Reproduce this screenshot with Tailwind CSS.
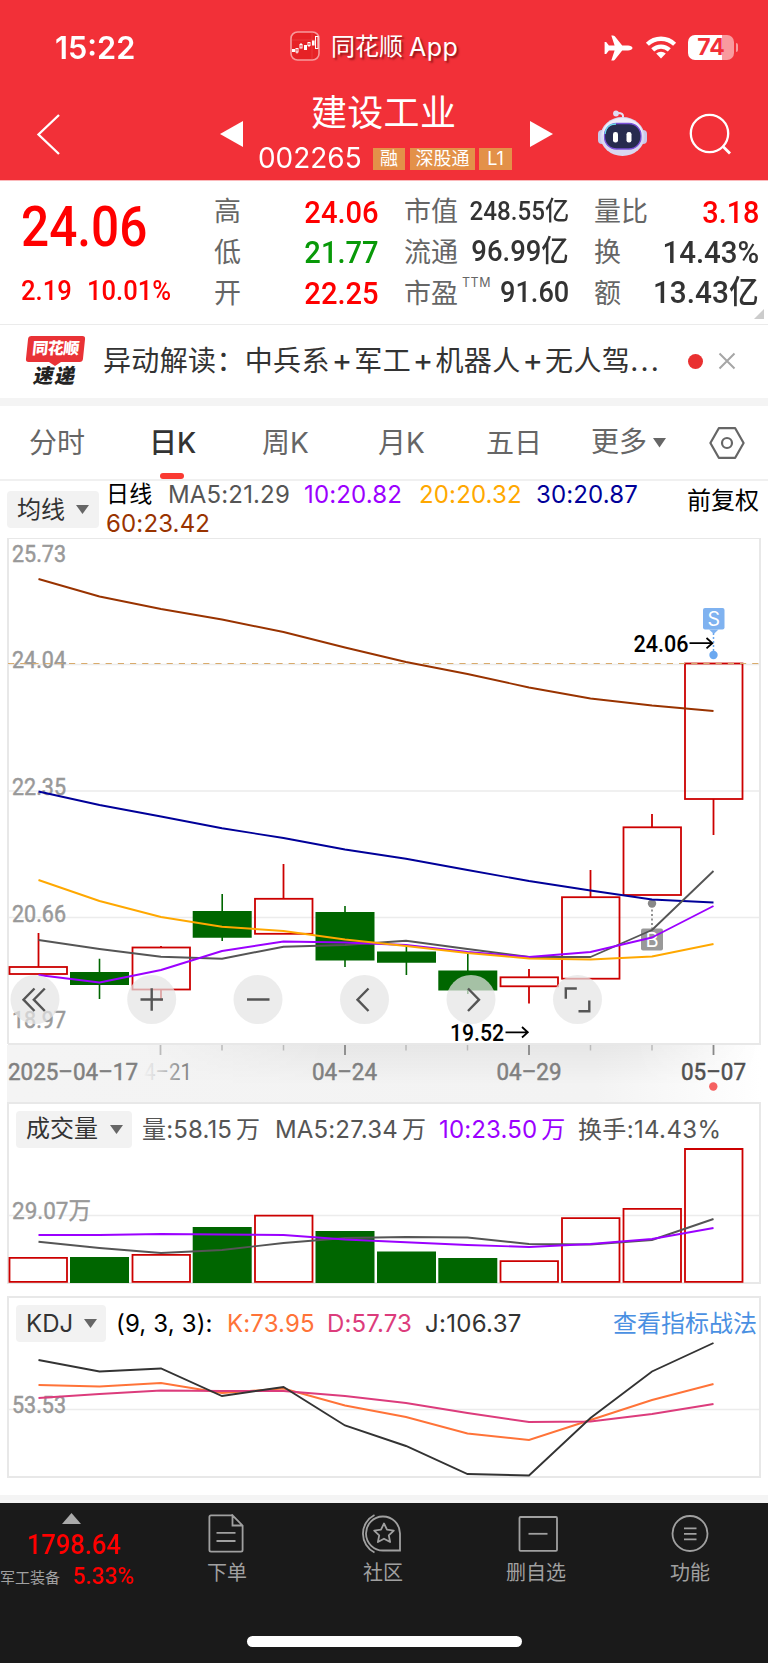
<!DOCTYPE html>
<html lang="zh-CN">
<head>
<meta charset="utf-8">
<title>建设工业 002265</title>
<script src="https://cdn.jsdelivr.net/npm/@tailwindcss/browser@4"></script>
</head>
<body class="w-[768px] h-[1663px] bg-white overflow-hidden font-['Inter','Noto_Sans_CJK_SC',sans-serif] text-[#333] whitespace-nowrap">

<!-- header -->
<header class="h-[180px] bg-[#f23038] text-white">
  <div class="h-[92px] pt-[29px] flex items-start">
    <div class="ml-[55px] w-[235px] h-[36px] flex items-center text-[31px] font-semibold leading-none"><span class="inline-block origin-left scale-x-[.99]">15:22</span></div>
    <svg class="mt-[2px] w-[30px] h-[30px]" viewBox="0 0 30 30">
      <rect x="1" y="1" width="28" height="28" rx="6.5" fill="#e62226" stroke="#f79a9c" stroke-width="1.6"/>
      <path d="M2 9h26M22 2v26" stroke="#f04a4c" stroke-width=".6"/>
      <g stroke="#fff" stroke-width="1" fill="none"><rect x="6" y="17.500" width="2" height="3.500"/><path d="M7 21v1.500M11 12v2M19 14.500v1.500"/><rect x="10" y="13.500" width="2" height="3.500"/><rect x="18" y="11.500" width="2" height="3"/><rect x="25.500" y="5.500" width="2.500" height="12"/></g>
      <path d="M2 18h3v3H2zM14 14h3v5h-3zM22 9.500h2.600v5H22z" fill="#fff"/>
    </svg>
    <div class="ml-[11px] w-[272px] h-[36px] flex items-center text-[24px] leading-none [text-shadow:2px_2px_2px_rgba(70,0,0,.55)]">同花顺<span class="ml-[6px] text-[25px] tracking-[.5px]">App</span></div>
    <svg class="mt-[6px] w-[30px] h-[26px]" viewBox="0 0 30 26"><path d="M29.500 13c0-1.600-2.300-2.500-4.500-2.500h-5.800L11.800 1.200C11.300.6 10.600.4 9.800.4H8.300l3.300 10.100H5.900L3.200 7H1.600v12h1.600l2.700-3.500h5.700L8.300 25.600h1.500c.8 0 1.500-.2 2-.8l7.400-9.300H25c2.200 0 4.500-.9 4.500-2.500z" fill="#fff"/></svg>
    <svg class="ml-[11px] mt-[6px] w-[34px] h-[24px]" viewBox="0 0 34 24"><g fill="none" stroke="#fff" stroke-width="4.300"><path d="M3.400 9.300a19.500 19.500 0 0 1 27.200 0"/><path d="M8.700 14.900a12 12 0 0 1 16.600 0"/></g><path d="M17 23.500l-4.800-4.900a6.900 6.900 0 0 1 9.600 0z" fill="#fff"/></svg>
    <div class="ml-[10px] mt-[6px] flex items-center">
      <div class="w-[46px] h-[25px] rounded-[7px] bg-[linear-gradient(90deg,#fff_74%,#f99a9e_74%)] flex items-center justify-center text-[23px] leading-none font-bold text-[#f23038]">74</div>
      <div class="ml-[2px] w-[2px] h-[9px] rounded-r-full bg-[#f99a9e]"></div>
    </div>
  </div>
  <div class="h-[88px] flex">
    <svg class="w-[232px] h-[88px]" viewBox="0 92 232 88"><path d="M59 115L38.500 134.500L59 154" fill="none" stroke="#fff" stroke-width="2.300"/></svg>
    <div class="w-[308px] -ml-[12px] flex">
      <svg class="w-[23px] h-[88px]" viewBox="220 92 23 88"><path d="M220 134l23-13v26z" fill="#fff"/></svg>
      <div class="ml-[15px] w-[256px]">
        <div class="h-[42px] pl-[53px] text-[36px] leading-[43px] tracking-[.3px]">建设工业</div>
        <div class="mt-[14px] h-[22px] flex items-center">
          <span class="w-[115px] -mt-[1px] text-[28.500px] leading-none"><span class="inline-block origin-left scale-x-[.98]">002265</span></span>
          <span class="w-[32px] h-[22px] bg-[#e39149] text-[18px] leading-[22px] text-center">融</span>
          <span class="ml-[5px] w-[65px] h-[22px] bg-[#e39149] text-[18px] leading-[22px] text-center">深股通</span>
          <span class="ml-[4px] w-[33px] h-[22px] bg-[#e39149] text-[18px] leading-[22px] text-center">L1</span>
        </div>
      </div>
    </div>
    <svg class="w-[240px] h-[88px]" viewBox="528 92 240 88">
      <path d="M530 121v26l23-13z" fill="#fff"/>
      <path d="M623 119v-3c0-2-1.500-3-5-3" fill="none" stroke="#e4e2f4" stroke-width="2"/><circle cx="616" cy="113.500" r="2.900" fill="#dfdcf3"/>
      <rect x="598" y="130" width="8" height="14" rx="4" fill="#c9c9ea"/><rect x="639" y="130" width="8" height="14" rx="4" fill="#c9c9ea"/>
      <ellipse cx="622.500" cy="136.500" rx="22" ry="19.500" fill="#d9d8f0"/><ellipse cx="622.500" cy="134" rx="20" ry="16" fill="#efeefa"/>
      <rect x="604.500" y="123.500" width="36.500" height="25.500" rx="12" fill="#272b4f" stroke="#7a50d8" stroke-width="1.300"/>
      <path d="M605 134c.5-6 4-10 11-10" fill="none" stroke="#69dfe8" stroke-width="1.300"/>
      <rect x="613" y="132" width="5" height="10.500" rx="2.300" fill="#fff"/><rect x="626.500" y="132" width="5" height="10.500" rx="2.300" fill="#fff"/>
      <circle cx="709.500" cy="133.500" r="18.700" fill="none" stroke="#fff" stroke-width="2.300"/><path d="M722.500 146l7.500 7.500" stroke="#fff" stroke-width="2.800"/>
    </svg>
  </div>
</header>

<!-- quote -->
<section class="h-[145px] border-t border-b border-t-[#fbb9bb] border-b-[#ebebeb] flex">
  <div class="w-[214px] pl-[21px] font-['Roboto'] font-medium text-[#ff0000]">
    <div class="mt-[18px] h-[56px] text-[55px] leading-[56px] font-medium"><span class="inline-block origin-left scale-x-[.9]">24.06</span></div>
    <div class="mt-[20px] h-[32px] text-[27.500px] leading-[32px] flex">
      <span class="w-[66px]"><span class="inline-block origin-left scale-x-[.93]">2.19</span></span><span><span class="inline-block origin-left scale-x-[.93]">10.01%</span></span>
    </div>
  </div>
  <div class="w-[165px] pt-[11px] text-[27px] text-[#666]">
    <div class="h-[41px] flex items-center justify-between"><span>高</span><span class="mb-[2px] origin-right scale-x-[.91] font-['Roboto'] font-medium text-[32px] leading-none text-[#ff0000]">24.06</span></div>
    <div class="h-[41px] flex items-center justify-between"><span>低</span><span class="mb-[3px] origin-right scale-x-[.91] font-['Roboto'] font-medium text-[32px] leading-none text-[#089908]">21.77</span></div>
    <div class="h-[41px] flex items-center justify-between"><span>开</span><span class="mb-[4px] origin-right scale-x-[.91] font-['Roboto'] font-medium text-[32px] leading-none text-[#ff0000]">22.25</span></div>
  </div>
  <div class="ml-[25px] w-[165px] pt-[11px] text-[27px] text-[#666]">
    <div class="h-[41px] flex items-center justify-between"><span class="w-[54px]">市值</span><span class="mb-[3px] origin-right scale-x-[.93] font-['Roboto','Noto_Sans_CJK_SC'] font-medium text-[26px] leading-none text-[#333]">248.55亿</span></div>
    <div class="h-[41px] flex items-center justify-between"><span class="w-[54px]">流通</span><span class="mb-[4px] origin-right scale-x-[.93] font-['Roboto','Noto_Sans_CJK_SC'] font-medium text-[29.500px] leading-none text-[#333]">96.99亿</span></div>
    <div class="h-[41px] flex items-center justify-between"><span class="flex">市盈<span class="ml-[4px] mt-[3px] text-[12.500px] leading-none tracking-[.5px]">TTM</span></span><span class="mb-[3px] origin-right scale-x-[.92] font-['Roboto'] font-medium text-[29.500px] leading-none text-[#333]">91.60</span></div>
  </div>
  <div class="ml-[25px] w-[165px] pt-[11px] text-[27px] text-[#666]">
    <div class="h-[41px] flex items-center justify-between"><span>量比</span><span class="mb-[2px] origin-right scale-x-[.9] font-['Roboto'] font-medium text-[32px] leading-none text-[#ff0000]">3.18</span></div>
    <div class="h-[41px] flex items-center justify-between"><span>换</span><span class="mb-[3px] origin-right scale-x-[.92] font-['Roboto'] font-medium text-[32px] leading-none text-[#333]">14.43%</span></div>
    <div class="h-[41px] flex items-center justify-between"><span>额</span><span class="mb-[5px] origin-right scale-x-[.93] font-['Roboto','Noto_Sans_CJK_SC'] font-medium text-[32px] leading-none text-[#333]">13.43亿</span></div>
  </div>
  <svg class="-ml-[5px] mt-[128px] w-[10px] h-[10px] shrink-0" viewBox="0 0 10 10"><path d="M10 0v10H0z" fill="#ccc"/></svg>
</section>

<!-- news -->
<section class="h-[73px] flex items-center">
  <div class="ml-[24px] w-[62px] h-[52px] flex flex-col items-center">
    <div class="w-[57px] h-[26px] rounded-[3px] bg-[#e93236] -skew-x-6 text-white text-[16px] font-black leading-[25px] text-center tracking-[-.5px]">同花顺</div>
    <svg class="w-[12px] h-[4px]" viewBox="0 0 12 4"><path d="M0 0h12L6 4z" fill="#e93236"/></svg>
    <div class="-skew-x-12 text-[#222] text-[20px] font-black leading-[20px] tracking-[1.500px]">速递</div>
  </div>
  <div class="ml-[17px] -mt-[1px] w-[585px] text-[28px] leading-[40px] tracking-[.35px] text-[#333]">异动解读：中兵系<span class="inline-block w-[24.500px] text-center text-[31px] leading-[28px]">+</span>军工<span class="inline-block w-[24.500px] text-center text-[31px] leading-[28px]">+</span>机器人<span class="inline-block w-[24.500px] text-center text-[31px] leading-[28px]">+</span>无人驾<span class="tracking-[2.200px]">...</span></div>
  <div class="w-[15px] h-[15px] -mt-[1px] rounded-full bg-[#e93030]"></div>
  <svg class="ml-[15px] -mt-[1px] w-[18px] h-[18px]" viewBox="0 0 18 18"><path d="M1.500 1.500l15 15M16.500 1.500l-15 15" stroke="#a6a6a6" stroke-width="2"/></svg>
</section>
<div class="h-[8px] bg-[#f4f4f4]"></div>

<!-- tabs -->
<nav class="h-[75px] border-b-2 border-[#f0f0f0] flex text-[28px] leading-[75px] text-[#666]">
  <div class="pl-[29px] w-[149px]">分时</div>
  <div class="w-[113px] h-[73px] relative font-medium text-[#333]">日K<span class="absolute left-[11px] bottom-0 w-[24px] h-[6px] rounded-full bg-[#fa3a32]"></span></div>
  <div class="w-[116px]">周K</div>
  <div class="w-[108px]">月K</div>
  <div class="w-[105px]">五日</div>
  <div class="flex items-center w-[118px]">更多<svg class="ml-[6px] w-[13px] h-[10px]" viewBox="0 0 13 10"><path d="M0 0h13L6.500 9.500z" fill="#666"/></svg></div>
  <svg class="mt-[21px] w-[36px] h-[32px]" viewBox="0 0 36 32"><path d="M9.800 1.200h16.400L34.600 16l-8.400 14.800H9.800L1.400 16z" fill="none" stroke="#666" stroke-width="2.200" stroke-linejoin="round"/><circle cx="18" cy="16" r="5" fill="none" stroke="#666" stroke-width="2.200"/></svg>
</nav>

<!-- moving averages -->
<section class="h-[57px] flex text-[24px]">
  <div class="ml-[7px] mt-[10px] w-[92px] h-[37px] rounded-[4px] bg-[#f2f2f2] flex items-center pl-[10px] leading-none">均线<svg class="ml-[11px] w-[13px] h-[9px]" viewBox="0 0 13 9"><path d="M0 0h13L6.500 9z" fill="#666"/></svg></div>
  <div class="ml-[7px] -mt-[1px] w-[581px] leading-[29px] tracking-[.15px]">
    <div class="flex h-[29px]">
      <span class="w-[62px] text-[23px]">
        <span class="text-black">日线</span>
      </span>
      <span class="w-[136px] text-[#555]">MA5:21.29</span>
      <span class="w-[115px] text-[#9b00ff]">10:20.82</span>
      <span class="w-[117px] text-[#ffa800]">20:20.32</span>
      <span class="text-[#000099]">30:20.87</span>
    </div>
    <div class="text-[#993300]">60:23.42</div>
  </div>
  <div class="leading-[39px] text-black">前复权</div>
</section>

<!-- candlestick chart -->
<svg class="block w-[768px] h-[564px]" viewBox="0 538 768 564" font-family="Roboto, 'Noto Sans CJK SC', sans-serif" font-size="24">
  <defs>
    <linearGradient id="axisFade" x1="0" x2="1" y1="0" y2="0"><stop offset="0" stop-color="#f4f4f4"/><stop offset=".78" stop-color="#f3f3f3"/><stop offset="1" stop-color="#fff"/></linearGradient>
    <linearGradient id="axisShade" x1="0" x2="0" y1="0" y2="1"><stop offset="0" stop-color="#000" stop-opacity=".05"/><stop offset="1" stop-color="#000" stop-opacity="0"/></linearGradient>
    <linearGradient id="shadeSide" x1="0" x2="1" y1="0" y2="0"><stop offset="0" stop-color="#000"/><stop offset=".3" stop-color="#fff"/><stop offset=".8" stop-color="#fff"/><stop offset="1" stop-color="#000"/></linearGradient>
    <mask id="shadeMask"><rect x="140" y="1045" width="620" height="57" fill="url(#shadeSide)"/></mask>
    <linearGradient id="dateFade" gradientUnits="userSpaceOnUse" x1="142" x2="182" y1="0" y2="0"><stop offset="0" stop-color="#999" stop-opacity="0"/><stop offset=".25" stop-color="#999" stop-opacity=".2"/><stop offset="1" stop-color="#888"/></linearGradient>
  </defs>
  <rect x="7" y="1045" width="754" height="57" fill="url(#axisFade)"/>
  <rect x="140" y="1045" width="620" height="40" fill="url(#axisShade)" mask="url(#shadeMask)"/>
  <g fill="none" stroke="#ececec" stroke-width="1.500">
    <path d="M8 664.500H760M8 791H760M8 917.500H760"/><path d="M8 1044V538H760V1044H8" stroke="#e8e8e8" stroke-width="2"/>
  </g>
  <g fill="#999" stroke="#999" stroke-width=".5">
    <text x="12" y="562" textLength="54" lengthAdjust="spacingAndGlyphs">25.73</text>
    <text x="12" y="668" textLength="54" lengthAdjust="spacingAndGlyphs">24.04</text>
    <text x="12" y="795" textLength="54" lengthAdjust="spacingAndGlyphs">22.35</text>
    <text x="12" y="921.500" textLength="54" lengthAdjust="spacingAndGlyphs">20.66</text>
    <text x="12" y="1027.500" textLength="54" lengthAdjust="spacingAndGlyphs">18.97</text>
  </g>
  <g fill="none" stroke="#cc0000" stroke-width="1.800">
    <rect x="9.500" y="967" width="57.500" height="7"/><path d="M38.500 933v34"/>
    <rect x="132.500" y="947.500" width="57.500" height="42"/><path d="M161 946v1M161 990v11"/>
    <rect x="255" y="898.800" width="57.500" height="35"/><path d="M283.500 864v35"/>
    <rect x="500.500" y="977.300" width="57.500" height="9"/><path d="M529 969v8M529 986.500v17"/>
    <rect x="562" y="897.200" width="57.500" height="81.500"/><path d="M590.500 870v27"/>
    <rect x="623.500" y="827.300" width="57.500" height="67.700"/><path d="M652 814v13"/>
    <rect x="685" y="663.500" width="57.500" height="135.500"/><path d="M713.500 799v36"/>
  </g>
  <path d="M8 663.500H760" stroke="#d9ab6c" stroke-width="1" stroke-dasharray="6.200 6"/>
  <g fill="#006600" stroke="none">
    <path d="M70 972h59v13H70zM98.700 958.700h1.600V999h-1.600z"/>
    <path d="M192.700 911h59v26.700h-59zM221.400 894h1.600v47h-1.600z"/>
    <path d="M315.500 912h59v48.500h-59zM344.200 906h1.600v61h-1.600z"/>
    <path d="M377 951.500h59v11.200h-59zM405.600 947h1.600v28h-1.600z"/>
    <path d="M438.300 970.500h59v20h-59zM467 954h1.600v40H467z"/>
  </g>
  <path d="M652 905v24" stroke="#888" stroke-width="1.800" stroke-dasharray="2 2.500"/><circle cx="652" cy="903.500" r="4.200" fill="#888"/>
  <rect x="641" y="928.500" width="22" height="22" rx="2" fill="#999"/>
  <text x="652" y="947" font-family="Inter" font-size="20" fill="#fff" text-anchor="middle">B</text>
  <g fill="none" stroke-width="1.900" stroke-linejoin="round">
    <path stroke="#993300" d="M38.500 579L99.500 596.500L161 609L222 619.500L283.500 632L345 647.500L406 662L467.500 674L529 687.500L590.500 698.500L652 705.500L713.500 711"/>
    <path stroke="#000099" d="M38.500 791.500L99.500 805L161 816.500L222 828.300L283.500 838L345 849.500L406 858.800L467.500 870L529 881L590.500 890.500L652 899.500L713.500 902.500"/>
    <path stroke="#555" d="M38.500 940L99.500 949L161 956.700L222 958.700L283.500 946.700L345 945L406 940.700L467.500 949L529 957L590.500 957L652 930L713.500 871"/>
    <path stroke="#9b00ff" d="M38.500 975L99.500 982.500L161 970L222 951L283.500 941.500L345 942.500L406 945L467.500 952L529 957L590.500 952L652 937.500L713.500 906"/>
    <path stroke="#ffa800" d="M38.500 880L99.500 901L161 917L222 926.700L283.500 931L345 939.500L406 946L467.500 953L529 958.500L590.500 959.500L652 956.500L713.500 944"/>
  </g>
  <rect x="703" y="608" width="21.500" height="21.500" rx="2" fill="#7fb2f0"/><path d="M709 629.500h9.500l-4.700 4.500z" fill="#7fb2f0"/>
  <text x="713.700" y="626" font-family="Inter" font-size="19.500" fill="#fff" text-anchor="middle">S</text>
  <path d="M713.500 633v18" stroke="#6aa8f0" stroke-width="1.500" stroke-dasharray="2 2"/><circle cx="713.500" cy="655" r="4.200" fill="#6aa8f0"/>
  <g fill="#000" font-weight="500"><text x="633.500" y="651.700" textLength="55" lengthAdjust="spacingAndGlyphs">24.06</text><text x="450" y="1041" textLength="54" lengthAdjust="spacingAndGlyphs">19.52</text></g>
  <path d="M689.500 643.200h22.500M706.500 638l5.800 5.200l-5.800 5.200M505.500 1032.300h22M522 1027l5.800 5.300l-5.800 5.200" fill="none" stroke="#000" stroke-width="1.800"/>
  <g fill="#e4e4e4" fill-opacity=".72"><circle cx="35" cy="999.500" r="24.500"/><circle cx="151.700" cy="999.500" r="24.500"/><circle cx="258" cy="999.500" r="24.500"/><circle cx="364.500" cy="999.500" r="24.500"/><circle cx="471" cy="999.500" r="24.500"/><circle cx="577.500" cy="999.500" r="24.500"/></g>
  <g fill="none" stroke="#555" stroke-width="2.400">
    <path d="M34.500 988.500L23.500 999.700L34.500 1011M44.800 988.500L33.800 999.700L44.800 1011M140.500 999.500h22.500M151.700 988.300v22.500M247 999.500h22.500M368.500 988.500L357.500 999.700L368.500 1011M468 988.500L479 999.700L468 1011"/>
    <path d="M576.800 988.500H565.800V998.700M578.500 1011.200H589.300V1000.500"/>
  </g>
  <path d="M222 1045v5.500M283.500 1045v5.500M406 1045v5.500M467.500 1045v5.500M590.500 1045v5.500M652 1045v5.500" stroke="#bbb" stroke-width="1.500"/>
  <path d="M160.500 1045v10" stroke="#bbb" stroke-width="1.800"/><path d="M345 1045v10M529 1045v10M713.500 1045v10" stroke="#888" stroke-width="1.800"/>
  <g fill="#808080" stroke="#808080" stroke-width=".5">
    <text x="8" y="1080.300" textLength="130" lengthAdjust="spacingAndGlyphs">2025–04–17</text>
    <text x="144" y="1080.300" textLength="48" lengthAdjust="spacingAndGlyphs" fill="url(#dateFade)" stroke="none">4–21</text>
    <text x="312" y="1080.300" textLength="65" lengthAdjust="spacingAndGlyphs">04–24</text>
    <text x="496.500" y="1080.300" textLength="65" lengthAdjust="spacingAndGlyphs">04–29</text>
    <text x="681" y="1080.300" textLength="65" lengthAdjust="spacingAndGlyphs" fill="#505050" stroke="#505050">05–07</text>
  </g>
  <circle cx="713.300" cy="1086.500" r="4.200" fill="#f56060"/>
</svg>

<!-- volume -->
<section class="ml-[7px] w-[754px] h-[182px] border-2 border-[#e8e8e8] flex flex-col text-[24px] leading-none">
  <div class="h-[50px] flex items-center text-[#555] tracking-[.15px]">
    <div class="ml-[7px] w-[116px] h-[37px] rounded-[4px] bg-[#f2f2f2] flex items-center pl-[10px] text-[#333] tracking-normal">成交量<svg class="ml-[12px] w-[13px] h-[9px]" viewBox="0 0 13 9"><path d="M0 0h13L6.500 9z" fill="#666"/></svg></div>
    <span class="mt-[1px] ml-[10px] w-[133px]">量:58.15<span class="ml-[4px]">万</span></span>
    <span class="mt-[1px] w-[164px]">MA5:27.34<span class="ml-[4px]">万</span></span>
    <span class="mt-[1px] w-[139px] text-[#9b00ff]">10:23.50<span class="ml-[4px]">万</span></span>
    <span class="mt-[1px] tracking-[.35px]">换手:14.43%</span>
  </div>
  <svg class="-mt-[6px] w-[750px] h-[134px]" viewBox="9 1148 750 134" overflow="visible">
    <path d="M9 1215.500H759" stroke="#ececec" stroke-width="1.500"/>
    <text x="12" y="1219" font-family="Roboto, 'Noto Sans CJK SC'" font-size="24" fill="#999" stroke="#999" stroke-width=".4" textLength="79" lengthAdjust="spacingAndGlyphs">29.07万</text>
    <path d="M70 1257h59v26H70zM192.700 1227h59v56h-59zM315.500 1231h59v52h-59zM377 1251.500h59v31.500h-59zM438.300 1258h59v25h-59z" fill="#006600"/>
    <g fill="none" stroke="#cc0000" stroke-width="1.800">
      <path d="M9.500 1257.800h57.500v24H9.500zM132.500 1254.800h57.500v27h-57.500zM255 1215.700h57.500v66.100h-57.500zM500.500 1261.200h57.500v20.600h-57.500zM562 1218.200h57.500v63.600h-57.500zM623.500 1208.800h57.500v73h-57.500zM685 1149h57.500v132.800h-57.500z"/>
    </g>
    <g fill="none" stroke-width="1.900">
      <path stroke="#555" d="M38.500 1241.700L99.500 1248L161 1253L222 1250L283.500 1243L345 1238L406 1237L467.500 1237.500L529 1244L590.500 1244.500L652 1240L713.500 1219"/>
      <path stroke="#9b00ff" d="M38.500 1235H99.500L161 1234L222 1234.500L283.500 1235L345 1239.500L406 1242.300L467.500 1245L529 1247L590.500 1244L652 1239L713.500 1228"/>
    </g>
  </svg>
</section>

<!-- KDJ -->
<section class="mt-[12px] ml-[7px] w-[754px] h-[182px] border-2 border-[#e8e8e8] flex flex-col text-[24px] leading-none">
  <div class="h-[50px] flex items-center text-[#333] tracking-[.15px]">
    <div class="ml-[7px] w-[90px] h-[37px] rounded-[4px] bg-[#f2f2f2] flex items-center pl-[10px] pt-[1px] tracking-normal">KDJ<svg class="ml-[11px] w-[13px] h-[9px]" viewBox="0 0 13 9"><path d="M0 0h13L6.500 9z" fill="#666"/></svg></div>
    <span class="mt-[2px] ml-[10px] w-[111px] text-black">(9, 3, 3):</span>
    <span class="mt-[2px] w-[100px] text-[#ff7338]">K:73.95</span>
    <span class="mt-[2px] w-[98px] text-[#dc3c7c]">D:57.73</span>
    <span class="mt-[2px] w-[188px] tracking-[.3px]">J:106.37</span>
    <span class="mt-[2px] text-[#4a90e2] tracking-normal">查看指标战法</span>
  </div>
  <svg class="w-[750px] h-[128px]" viewBox="9 1348 750 128" overflow="visible">
    <path d="M9 1409.500H759" stroke="#ececec" stroke-width="1.500"/>
    <text x="12" y="1413" font-family="Roboto" font-size="24" fill="#999" stroke="#999" stroke-width=".5" textLength="54" lengthAdjust="spacingAndGlyphs">53.53</text>
    <g fill="none" stroke-width="1.900">
      <path stroke="#ff7338" d="M38.500 1385L99.500 1386.500L161 1383L222 1393L283.500 1388.500L345 1405.500L406 1417L467.500 1433.500L529 1440L590.500 1420L652 1400L713.500 1384"/>
      <path stroke="#dc3c7c" d="M38.500 1398L99.500 1394L161 1390.500L222 1391H283.500L345 1396L406 1403L467.500 1413L529 1422L590.500 1421.500L652 1414L713.500 1404"/>
      <path stroke="#333" d="M38.500 1360L99.500 1371.500L161 1368.500L222 1396L283.500 1387L345 1425.500L406 1446L467.500 1474L529 1475.500L590.500 1418L652 1371.500L713.500 1343"/>
    </g>
  </svg>
</section>
<div class="mt-[17px] h-[8px] bg-[#f4f4f4]"></div>

<!-- bottom bar -->
<footer class="h-[160px] bg-[#1a1a1a] text-[#a0a0a0]">
  <div class="h-[133px] flex text-[20px] leading-none">
    <div class="w-[148px] pt-[10px]">
      <svg class="ml-[62px] w-[19px] h-[11px]" viewBox="0 0 19 11"><path d="M9.500 0L19 11H0z" fill="#aaa"/></svg>
      <div class="mt-[6px] pl-[27px] h-[28px] font-['Roboto'] text-[28px] leading-[29px] text-[#ff0000]"><span class="inline-block origin-left scale-x-[.91] font-medium">1798.64</span></div>
      <div class="mt-[6px] flex items-center h-[24px]"><span class="w-[73px] mt-[2px] text-[15px]">军工装备</span><span class="font-['Roboto'] font-medium text-[24px] text-[#ff0000] origin-left scale-x-[.94]">5.33%</span></div>
    </div>
    <div class="w-[158px] pt-[11px] flex flex-col items-center"><svg class="-ml-[3px] w-[36px] h-[40px]" viewBox="207.500 1514 36 40"><g fill="none" stroke="#a0a0a0" stroke-width="1.800"><path d="M232 1515.300H210.500q-1.600 0-1.600 1.600V1550q0 1.600 1.600 1.600H240.500q1.600 0 1.600-1.600V1525.500L232 1515.300V1525.500H242"/><path d="M216 1532.800h19M216 1541h19"/></g></svg><div class="mt-[9px]">下单</div></div>
    <div class="w-[154px] pt-[11px] flex flex-col items-center"><svg class="-ml-[4px] w-[44px] h-[40px]" viewBox="360 1514 44 40"><g fill="none" stroke="#a0a0a0" stroke-width="1.800"><path d="M401 1550.500H384.500A17 17 0 1 1 401 1533.500z"/><path d="M375.500 1515A21 21 0 0 0 375.500 1552.500"/><path stroke-linejoin="round" d="M385 1523.500l3 6.200 6.800.9-5 4.700 1.300 6.700-6.100-3.300-6.100 3.300 1.300-6.700-5-4.700 6.800-.9z"/></g></svg><div class="mt-[9px]">社区</div></div>
    <div class="w-[152px] pt-[11px] flex flex-col items-center"><svg class="ml-[3px] w-[40px] h-[40px]" viewBox="517.500 1514 40 40"><g fill="none" stroke="#a0a0a0" stroke-width="1.800"><rect x="519" y="1517" width="37.500" height="33.800" rx="1"/><path d="M528 1533.800h19"/></g></svg><div class="mt-[9px]">删自选</div></div>
    <div class="w-[156px] pt-[11px] flex flex-col items-center"><svg class="w-[40px] h-[40px]" viewBox="670 1514 40 40"><g fill="none" stroke="#a0a0a0" stroke-width="1.800"><circle cx="690" cy="1533.500" r="17.500"/><path d="M684 1528.300h12.500M684 1533.800h12.500M684 1539.300h12.500"/></g></svg><div class="mt-[9px]">功能</div></div>
  </div>
  <div class="ml-[247px] w-[275px] h-[11px] rounded-full bg-white"></div>
</footer>
</body>
</html>
